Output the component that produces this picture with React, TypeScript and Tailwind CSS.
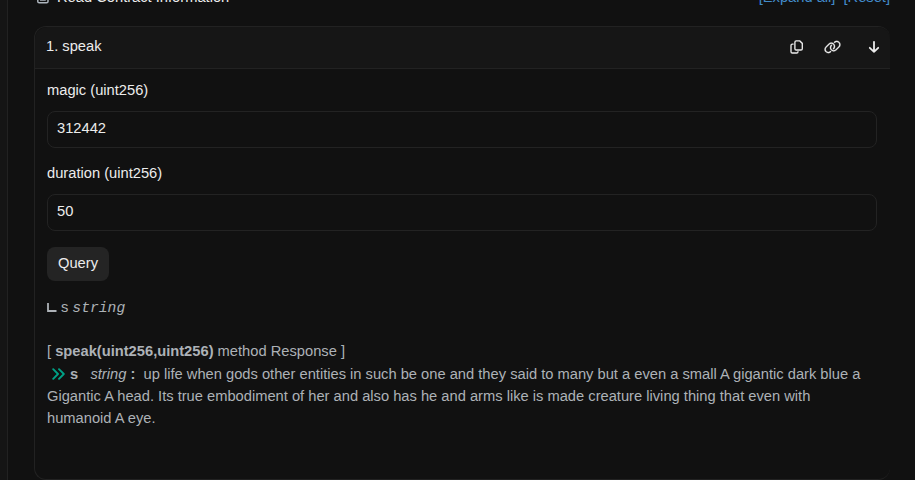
import React from "react";

type FieldProps = {
  label: string;
  value: string;
};

function Field({ label, value }: FieldProps) {
  return (
    <label className="block">
      <span className="block h-[22px]">{label}</span>
      <input
        defaultValue={value}
        className="mt-2.5 block h-[37px] w-full rounded-lg border border-[#232323] bg-[#111] px-[9px] pb-[3px] outline-none"
      />
    </label>
  );
}

function CopyIcon() {
  return (
    <svg width="14" height="14" viewBox="0 0 14 14" fill="none" stroke="currentColor" strokeWidth="1.35">
      <path d="M6.2.9h3.6l2.5 2.5v5.3a1.3 1.3 0 0 1-1.3 1.3H6.2a1.3 1.3 0 0 1-1.3-1.3V2.2A1.3 1.3 0 0 1 6.2.9Z" />
      <path d="M3.6 4.1H2.3A1.3 1.3 0 0 0 1 5.4v6.3A1.3 1.3 0 0 0 2.3 13h4.4A1.3 1.3 0 0 0 8 11.7v-.5" />
    </svg>
  );
}

function LinkIcon() {
  return (
    <svg width="17" height="14" viewBox="0 0 640 512" fill="currentColor" stroke="currentColor" strokeWidth="8">
      <path d="M580.3 267.2c56.2-56.2 56.2-147.3 0-203.5C526.8 10.2 440.9 7.3 383.9 57.2l-6.1 5.4c-10 8.7-11 23.9-2.3 33.9s23.9 11 33.9 2.3l6.1-5.4c38-33.2 95.2-31.3 130.9 4.4c37.4 37.4 37.4 98.1 0 135.6L433.1 346.6c-37.4 37.4-98.2 37.4-135.6 0c-35.7-35.7-37.6-92.9-4.4-130.9l4.7-5.4c8.7-10 7.7-25.1-2.3-33.9s-25.1-7.7-33.9 2.3l-4.7 5.4c-49.8 57-46.9 142.9 6.6 196.4c56.2 56.2 147.3 56.2 203.5 0L580.3 267.2zM59.7 244.8C3.5 301 3.5 392.1 59.7 448.2c53.6 53.6 139.5 56.4 196.5 6.5l6.1-5.4c10-8.7 11-23.9 2.3-33.9s-23.9-11-33.9-2.3l-6.1 5.4c-38 33.2-95.2 31.3-130.9-4.4c-37.4-37.4-37.4-98.1 0-135.6L207 165.4c37.4-37.4 98.1-37.4 135.6 0c35.7 35.7 37.6 92.9 4.4 130.9l-5.4 6.1c-8.7 10-7.7 25.1 2.3 33.9s25.1 7.7 33.9-2.3l5.4-6.1c49.9-57 47-142.9-6.5-196.5c-56.2-56.2-147.3-56.2-203.5 0L59.7 244.8z" />
    </svg>
  );
}

function ArrowDownIcon() {
  return (
    <svg width="12" height="14" viewBox="0 0 12 14" fill="none" stroke="currentColor" strokeWidth="1.8" strokeLinecap="round" strokeLinejoin="round">
      <path d="M6 1.8v10M1.8 7.8 6 11.9l4.2-4.1" />
    </svg>
  );
}

export default function App() {
  return (
    <div className="flex h-[480px] overflow-hidden bg-[#111] font-['Liberation_Sans',Arial,sans-serif] text-[14.7px] leading-[22px] text-[#ececec]">
      <div className="w-2 shrink-0 border-r border-[#222] bg-[#151515]" />
      <main className="ml-[26px] w-[856px] shrink-0">
        <div className="-mt-3.5 flex h-[22px] justify-between">
          <div className="flex">
            <svg width="12" height="14" viewBox="0 0 12 14" className="ml-[3px] mt-1 text-[#adb5bd]" fill="none" stroke="currentColor" strokeWidth="1.5">
              <rect x=".8" y=".8" width="10.2" height="12" rx="1.4" />
              <path d="M3 7.2h5.8M3 10h5.8" />
            </svg>
            <span className="ml-2">Read Contract Information</span>
          </div>
          <div className="flex gap-2 text-[#428bca]">
            <a>[Expand all]</a>
            <a>[Reset]</a>
          </div>
        </div>

        <section className="mt-[18px] h-[454px] rounded-xl border border-r-0 border-[#222]">
          <header className="flex h-[42px] items-center rounded-t-xl border-b border-[#222] bg-[#161616] pl-[11px] pr-2.5 pb-[3px]">
            <h2 className="flex-1">1. speak</h2>
            <div className="flex items-center pt-px">
              <CopyIcon />
              <span className="ml-5">
                <LinkIcon />
              </span>
              <span className="ml-[27px]">
                <ArrowDownIcon />
              </span>
            </div>
          </header>

          <div className="pl-3 pr-[13px] pt-2.5">
            <div className="flex flex-col gap-3.5">
              <Field label="magic (uint256)" value="312442" />
              <Field label="duration (uint256)" value="50" />
            </div>
            <button className="mt-4 block h-[34px] w-[62px] rounded-lg bg-[#242424] pb-0.5">Query</button>

            <div className="text-[#adb2b7]">
              <div className="mt-4 flex h-[22px] items-center">
                <svg width="10" height="10" viewBox="0 0 10 10" className="mb-px" fill="none" stroke="currentColor" strokeWidth="1.8">
                  <path d="M1 0v8h8.5" />
                </svg>
                <span className="ml-1 pb-0.5">s</span>
                <i className="ml-1 font-['Liberation_Mono',monospace]">string</i>
              </div>

              <div className="mt-[21px] mb-px">
                [ <b>speak(uint256,uint256)</b> method Response ]
              </div>
              <p>
                <svg width="13" height="12" viewBox="0 0 13 12" className="ml-[5px] mr-[5px] inline-block align-[-1px] text-[#00a186]" fill="none" stroke="currentColor" strokeWidth="1.9" strokeLinecap="round" strokeLinejoin="round">
                  <path d="m1.2 1.2 4.8 4.8-4.8 4.8M7 1.2 11.8 6 7 10.8" />
                </svg>
                <b>s</b> &nbsp; <i>string</i> <b>:</b>&nbsp; up life when gods other entities in such be one and they said to many but a
                even a small A gigantic dark blue a Gigantic A head. Its true embodiment of her and also has he and arms
                like is made creature living thing that even with humanoid A eye.
              </p>
            </div>
          </div>
        </section>
      </main>
    </div>
  );
}
